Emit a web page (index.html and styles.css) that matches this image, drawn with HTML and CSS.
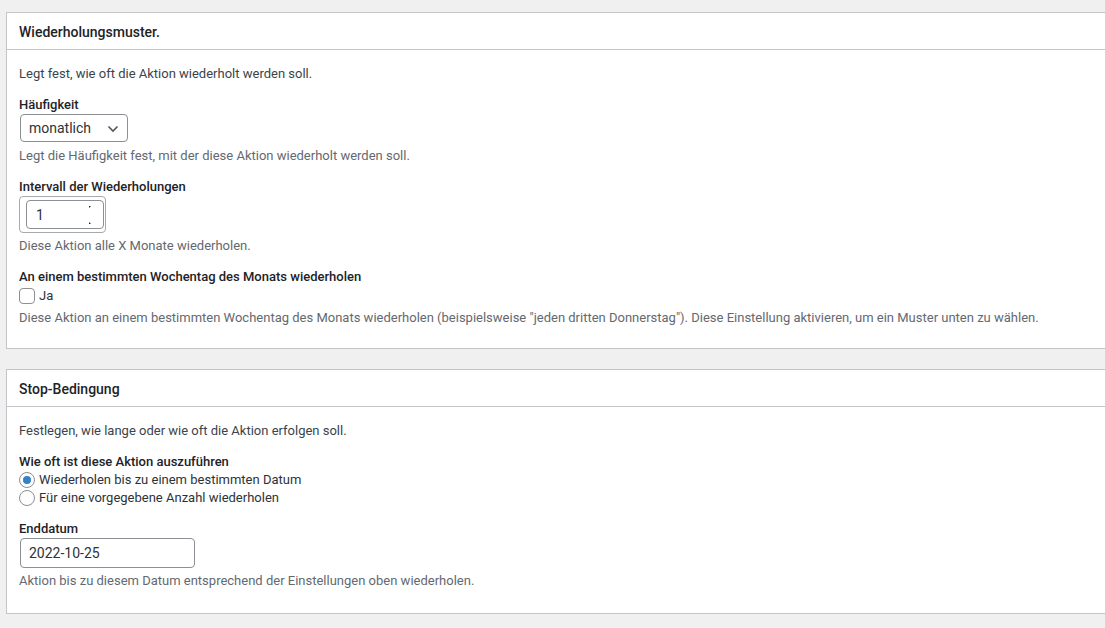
FILE: index.html
```html
<!DOCTYPE html>
<html lang="de"><head><meta charset="utf-8"><title>Wiederholung</title><link rel="stylesheet" href="styles.css"></head>
<body>
<div class="page">
  <section class="panel">
    <h2 class="panel-head">Wiederholungsmuster.</h2>
    <div class="panel-body body-first">
      <p class="intro">Legt fest, wie oft die Aktion wiederholt werden soll.</p>
      <div class="field">
        <div class="label">Häufigkeit</div>
        <div class="select">
          <span>monatlich</span>
          <svg class="chev" width="12" height="8" viewBox="0 0 12 8"><path d="M1.5 1.5 L6 6 L10.5 1.5" fill="none" stroke="#50575e" stroke-width="1.6"/></svg>
        </div>
        <p class="desc">Legt die Häufigkeit fest, mit der diese Aktion wiederholt werden soll.</p>
      </div>
      <div class="field">
        <div class="label">Intervall der Wiederholungen</div>
        <div class="num-outer">
          <div class="num-inner">
            <span>1</span>
            <span class="spin"><i class="up"></i><i class="down"></i></span>
          </div>
        </div>
        <p class="desc">Diese Aktion alle X Monate wiederholen.</p>
      </div>
      <div class="field">
        <div class="label">An einem bestimmten Wochentag des Monats wiederholen</div>
        <div class="check-row"><span class="checkbox"></span><span class="opt">Ja</span></div>
        <p class="desc">Diese Aktion an einem bestimmten Wochentag des Monats wiederholen (beispielsweise "jeden dritten Donnerstag"). Diese Einstellung aktivieren, um ein Muster unten zu wählen.</p>
      </div>
    </div>
  </section>

  <section class="panel">
    <h2 class="panel-head">Stop-Bedingung</h2>
    <div class="panel-body body-second">
      <p class="intro">Festlegen, wie lange oder wie oft die Aktion erfolgen soll.</p>
      <div class="field">
        <div class="label">Wie oft ist diese Aktion auszuführen</div>
        <div class="radio-row"><span class="radio checked"></span><span class="opt">Wiederholen bis zu einem bestimmten Datum</span></div>
        <div class="radio-row"><span class="radio"></span><span class="opt">Für eine vorgegebene Anzahl wiederholen</span></div>
      </div>
      <div class="field">
        <div class="label">Enddatum</div>
        <div class="text-input">2022-10-25</div>
        <p class="desc">Aktion bis zu diesem Datum entsprechend der Einstellungen oben wiederholen.</p>
      </div>
    </div>
  </section>
</div>
</body></html>
```
FILE: styles.css
```css
html,body{margin:0;padding:0;}
body{background:#f0f0f1;font-family:Roboto,"Liberation Sans",sans-serif;font-size:13px;line-height:18px;color:#3c434a;overflow:hidden;}
.page{padding:12px 0 0 6px;display:flex;flex-direction:column;gap:20px;}
.panel{background:#fff;border:1px solid #c3c4c7;border-right:0;margin-right:-20px;}
.panel-head{margin:0;height:36px;display:flex;align-items:center;padding:1px 12px 0;box-sizing:border-box;font-size:14px;font-weight:500;color:#1d2327;border-bottom:1px solid #c3c4c7;height:37px;}
.panel-body{padding:15px 12px 22px;display:flex;flex-direction:column;gap:13px;}
.body-first{padding-bottom:21px;}
.body-second{padding-bottom:23px;}
.intro{margin:0;color:#3c434a;}
.field{display:flex;flex-direction:column;align-items:flex-start;}
.label{color:#1d2327;font-weight:500;}
.desc{margin:4px 0 0;color:#646970;}
.select{box-sizing:border-box;width:108px;height:28px;margin:0 0 1px 1px;border:1px solid #8c8f94;border-radius:4px;display:flex;align-items:center;justify-content:space-between;padding:0 8px;color:#2c3338;font-size:14px;}
.chev{margin-top:1px;}
.num-outer{box-sizing:border-box;width:87px;height:37px;border:1px solid #a7aaad;border-radius:4px;padding:3px 1px 3px 6px;}
.num-inner{box-sizing:border-box;height:100%;border:1px solid #8c8f94;border-radius:4px;display:flex;align-items:center;justify-content:space-between;padding:0 12px 0 9px;color:#2c3338;font-size:14px;}
.spin{display:flex;flex-direction:column;justify-content:space-between;height:18px;}
.spin i{display:block;width:0;height:0;}
.spin .up{border-top:2px solid #1d2327;border-right:2px solid transparent;}
.spin .down{border-bottom:2px solid #1d2327;border-right:2px solid transparent;}
.check-row,.radio-row{display:flex;align-items:center;gap:4px;height:18px;}
.check-row{margin-top:1px;}
.checkbox{box-sizing:border-box;width:16px;height:16px;border:1px solid #8c8f94;border-radius:4px;background:#fff;}
.radio{box-sizing:border-box;width:16px;height:16px;border:1px solid #8c8f94;border-radius:50%;background:#fff;display:flex;align-items:center;justify-content:center;}
.radio.checked::before{content:"";width:8px;height:8px;border-radius:50%;background:#3582c4;}
.opt{color:#2c3338;}
.text-input{box-sizing:border-box;width:175px;height:30px;margin-left:1px;border:1px solid #8c8f94;border-radius:4px;display:flex;align-items:center;padding:0 8px;color:#2c3338;font-size:14px;}
```
